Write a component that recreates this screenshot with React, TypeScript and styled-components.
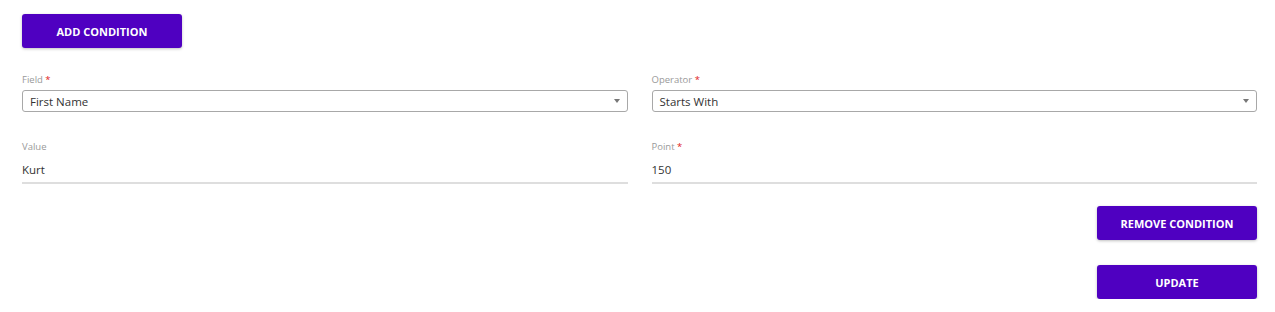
import React from 'react'
import styled, { createGlobalStyle } from 'styled-components'

const GlobalStyle = createGlobalStyle`
  body {
    margin: 0;
    background: #fff;
    font-family: 'Open Sans', 'Noto Sans', sans-serif;
  }
`

const App = () => {
  return (
    <>
      <GlobalStyle />
      <Page>
        <PrimaryButton>Add Condition</PrimaryButton>

        <FormGrid>
          <FieldBlock>
            <Label>
              Field <Required>*</Required>
            </Label>
            <SelectBox>
              <span>First Name</span>
              <Caret />
            </SelectBox>
          </FieldBlock>
          <FieldBlock>
            <Label>
              Operator <Required>*</Required>
            </Label>
            <SelectBox>
              <span>Starts With</span>
              <Caret />
            </SelectBox>
          </FieldBlock>
          <FieldBlock>
            <Label>Value</Label>
            <TextInput>Kurt</TextInput>
          </FieldBlock>
          <FieldBlock>
            <Label>
              Point <Required>*</Required>
            </Label>
            <TextInput>150</TextInput>
          </FieldBlock>
        </FormGrid>

        <Actions>
          <PrimaryButton>Remove Condition</PrimaryButton>
          <PrimaryButton>Update</PrimaryButton>
        </Actions>
      </Page>
    </>
  )
}

export default App

const Page = styled.div`
  padding: 14px 18px 0 22px;
  display: flex;
  flex-direction: column;
  align-items: flex-start;
`

const PrimaryButton = styled.button`
  width: 160px;
  height: 34px;
  border: none;
  border-radius: 3px;
  background: #4f00c1;
  color: #fff;
  font-family: 'Open Sans', sans-serif;
  font-weight: 700;
  font-size: 11px;
  text-transform: uppercase;
  box-shadow: 0 1px 3px rgba(0, 0, 0, 0.25);
  cursor: pointer;
`

const FormGrid = styled.div`
  align-self: stretch;
  display: grid;
  grid-template-columns: repeat(2, minmax(0, 1fr));
  column-gap: 24px;
  row-gap: 29px;
  margin-top: 26px;
`

const FieldBlock = styled.div`
  display: flex;
  flex-direction: column;
`

const Label = styled.label`
  font-size: 9.5px;
  line-height: 12px;
  color: #9a9a9a;
  margin-bottom: 4px;
`

const Required = styled.span`
  color: #e02020;
`

const SelectBox = styled.div`
  height: 22px;
  box-sizing: border-box;
  border: 1px solid #a8a8a8;
  border-radius: 3px;
  display: flex;
  align-items: center;
  justify-content: space-between;
  padding: 0 7px;
  font-size: 11.5px;
  color: #333;
`

const Caret = styled.span`
  width: 0;
  height: 0;
  border-left: 3.5px solid transparent;
  border-right: 3.5px solid transparent;
  border-top: 4px solid #777;
`

const TextInput = styled.div`
  height: 25px;
  display: flex;
  align-items: center;
  font-size: 11.5px;
  color: #333;
  border-bottom: 2px solid #dedede;
`

const Actions = styled.div`
  align-self: flex-end;
  display: flex;
  flex-direction: column;
  gap: 25px;
  margin-top: 22px;
`
